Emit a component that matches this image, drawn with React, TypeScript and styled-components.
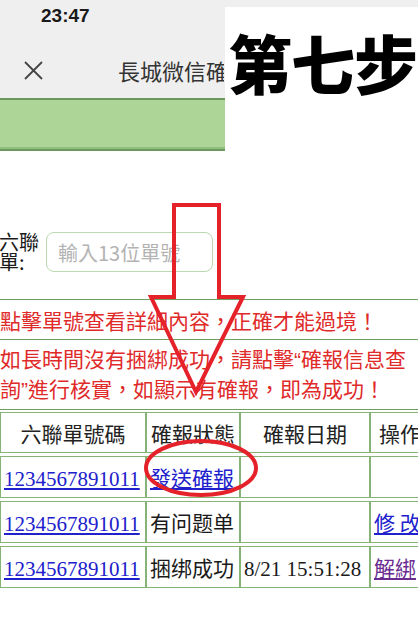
import { createGlobalStyle, styled } from "styled-components";

const GlobalStyle = createGlobalStyle`
  html, body {
    margin: 0;
    padding: 0;
    background: #ffffff;
    overflow: hidden;
  }
  body {
    font-family: "Noto Sans CJK TC", "Noto Sans", sans-serif;
  }
`;

const Page = styled.div`
  position: relative;
  width: 418px;
  height: 621px;
  overflow: hidden;
  background: #ffffff;
`;

const StatusBar = styled.div`
  height: 38px;
  background: #efefef;
  padding: 6px 0 0 41px;
  box-sizing: border-box;
  font-family: "Liberation Sans", Arial, sans-serif;
  font-weight: 700;
  font-size: 19px;
  line-height: 20px;
  color: #1a1a1a;
`;

const NavBar = styled.div`
  height: 60px;
  background: #efefef;
  display: flex;
  align-items: center;
  padding-left: 23px;
  box-sizing: border-box;
`;

const CloseButton = styled.span`
  display: flex;
  width: 21px;
  height: 21px;
  margin-top: 4px;
`;

const Title = styled.span`
  margin-left: 74px;
  margin-top: 4px;
  width: 106px;
  overflow: hidden;
  font-size: 22px;
  color: #333333;
  white-space: nowrap;
`;

const GreenBar = styled.div`
  height: 53px;
  background: #acd597;
  border-top: 2px solid #6b9a5c;
  border-bottom: 2px solid #6b9a5c;
  box-sizing: border-box;
  box-shadow: inset 0 -17px 0 -15px #8fbf7c;
`;

const FormRow = styled.div`
  display: flex;
  align-items: center;
  margin-top: 81px;
  height: 40px;
`;

const Label = styled.div`
  width: 42px;
  font-size: 20px;
  line-height: 20px;
  color: #1a1a1a;
  margin-left: -1px;
`;

const Input = styled.input`
  width: 167px;
  height: 40px;
  margin-left: 5px;
  box-sizing: border-box;
  border: 1.5px solid #bcd8b0;
  border-radius: 8px;
  padding: 0 0 0 11px;
  font-family: "Noto Sans CJK TC", sans-serif;
  font-size: 20px;
  outline: none;
  &::placeholder {
    color: #b3b3b3;
  }
`;

const Notices = styled.div`
  margin-top: 27px;
  width: 418px;
  border-top: 1px solid #6f9f60;
`;

const Notice = styled.div`
  font-size: 21px;
  line-height: 28px;
  color: #e02a2a;
  padding: ${(p: { $pad: string }) => p.$pad};
  border-bottom: 1px solid #6f9f60;
  white-space: nowrap;
`;

const Quote = styled.span`
  font-family: "Liberation Sans", Arial, sans-serif;
`;

const Table = styled.table`
  border-collapse: separate;
  border-spacing: 0 3px;
  margin-top: -1px;
  width: 430px;
  table-layout: fixed;
`;

const Th = styled.th`
  width: ${(p: { $w: number }) => p.$w}px;
  height: 39px;
  border: 1px solid #86b476;
  font-weight: 400;
  font-size: 21px;
  color: #222222;
  text-align: center;
  padding: 0;
  white-space: nowrap;
  overflow: hidden;
`;

const Td = styled.td`
  height: 40px;
  border: 1px solid #86b476;
  font-size: 21px;
  color: #1a1a1a;
  padding: 0 2px 0 3px;
  white-space: nowrap;
  overflow: hidden;
`;

const Serif = styled.span`
  font-family: "Liberation Serif", "Times New Roman", serif;
`;

const Link = styled.a`
  color: ${(p: { $visited?: boolean }) => (p.$visited ? "#6a2c91" : "#2020cc")};
  text-decoration: underline;
  text-underline-offset: 2px;
  cursor: pointer;
`;

const StepBadge = styled.div`
  position: absolute;
  left: 225px;
  top: 7px;
  width: 193px;
  height: 150px;
  background: #ffffff;
  font-family: "Noto Sans CJK SC", sans-serif;
  font-weight: 900;
  font-size: 64px;
  line-height: 64px;
  color: #000000;
  padding: 22px 0 0 3px;
  box-sizing: border-box;
  white-space: nowrap;
  letter-spacing: -1px;
`;

const Annotation = styled.svg`
  position: absolute;
  left: 0;
  top: 0;
  pointer-events: none;
`;

const rows = [
  { code: "1234567891011", status: <Link>發送確報</Link>, date: "", op: null },
  { code: "1234567891011", status: "有问题单", date: "", op: <Link>修 改</Link> },
  { code: "1234567891011", status: "捆绑成功", date: "8/21 15:51:28", op: <Link $visited>解綁</Link> },
];

export default function App() {
  return (
    <Page>
      <GlobalStyle />
      <StatusBar>23:47</StatusBar>
      <NavBar>
        <CloseButton>
          <svg width="21" height="21" viewBox="0 0 21 21">
            <path d="M2 2 L19 19 M19 2 L2 19" stroke="#444" strokeWidth="1.8" fill="none" />
          </svg>
        </CloseButton>
        <Title>長城微信確報</Title>
      </NavBar>
      <GreenBar />

      <FormRow>
        <Label>六聯單:</Label>
        <Input placeholder="輸入13位單號" />
      </FormRow>

      <Notices>
        <Notice $pad="6px 0 5px 0">點擊單號查看詳細內容，正確才能過境！</Notice>
        <Notice $pad="4px 0 5px 0">
          如長時間沒有捆綁成功，請點擊<Quote>“</Quote>確報信息查
          <br />
          詢<Quote>”</Quote>進行核實，如顯示有確報，即為成功！
        </Notice>
      </Notices>

      <Table>
        <thead>
          <tr>
            <Th $w={144}>六聯單號碼</Th>
            <Th $w={92}>確報狀態</Th>
            <Th $w={128}>確報日期</Th>
            <Th $w={58}>操作</Th>
          </tr>
        </thead>
        <tbody>
          {rows.map((r, i) => (
            <tr key={i}>
              <Td>
                <Link>
                  <Serif>{r.code}</Serif>
                </Link>
              </Td>
              <Td>{r.status}</Td>
              <Td>
                <Serif>{r.date}</Serif>
              </Td>
              <Td>{r.op}</Td>
            </tr>
          ))}
        </tbody>
      </Table>

      <StepBadge>第七步</StepBadge>

      <Annotation width="418" height="621" viewBox="0 0 418 621">
        <polygon
          points="174,205 219,205 219,297 243,297 196,392 151,297 174,297"
          fill="none"
          stroke="#e5212a"
          strokeWidth="4"
          strokeLinejoin="miter"
        />
        <ellipse cx="201" cy="468" rx="55" ry="27" fill="none" stroke="#e5212a" strokeWidth="4" />
      </Annotation>
    </Page>
  );
}
